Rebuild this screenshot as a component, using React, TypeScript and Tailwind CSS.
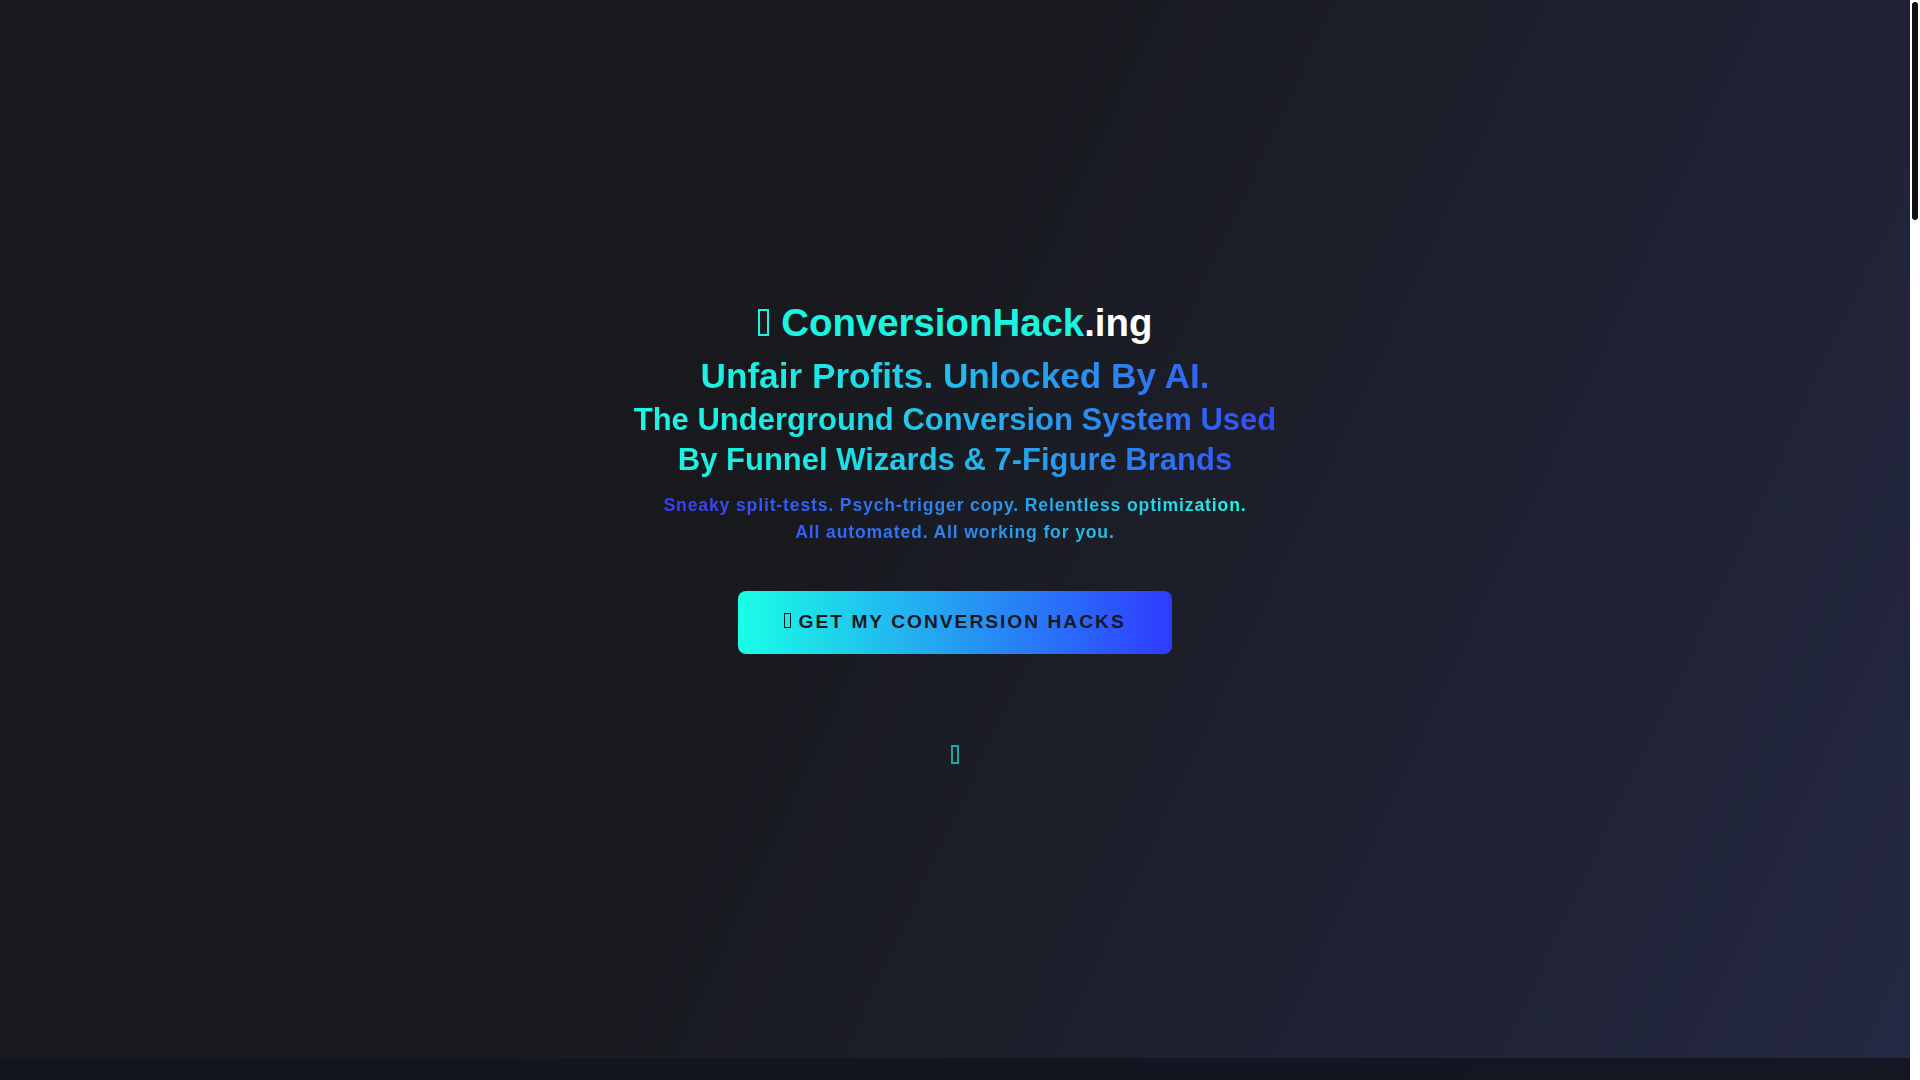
import React from "react";

function Tofu({ className }: { className: string }) {
  return <span className={"inline-block align-baseline border-solid border-current " + className} />;
}

export default function App() {
  return (
    <div className="bg-white pr-[10px] font-['Liberation_Sans',Arial,sans-serif]">
      <main className="bg-[#14161f]">
        {/* hero */}
        <section className="h-[1058px] bg-[linear-gradient(115deg,#18191d_40%,#242842_100%)] flex flex-col items-center pt-[300px] text-center">
          <div className="text-[38.4px] leading-[46px] font-bold">
            <span className="text-[#1af4e1]">
              <Tofu className="w-[11px] h-[27px] border-2 mr-[2px]" /> ConversionHack
            </span>
            <span className="text-white">.ing</span>
          </div>

          <div className="mt-[9px] w-fit font-bold bg-[linear-gradient(90deg,#1af7e3_0%,#1de6e6_30%,#2a90f0_70%,#3447fa_100%)] bg-clip-text text-transparent">
            <div className="text-[35.2px] leading-[42px]">Unfair Profits. Unlocked By AI.</div>
            <div className="mt-[3px] text-[31px] leading-[40px]">
              The Underground Conversion System Used
              <br />
              By Funnel Wizards &amp; 7-Figure Brands
            </div>
          </div>

          <p className="mt-[12px] w-fit text-[17.6px] leading-[27px] font-bold tracking-[0.85px] bg-[linear-gradient(90deg,#3a3aff_0%,#2a8ff0_55%,#1affe4_100%)] bg-clip-text text-transparent">
            Sneaky split-tests. Psych-trigger copy. Relentless optimization.
            <br />
            All automated. All working for you.
          </p>

          <button className="mt-[45px] h-[63px] px-[46.5px] rounded-[8px] bg-[linear-gradient(90deg,#1affe6,#2f3bff)] text-[#18181d] text-[19.2px] font-bold uppercase tracking-[2px]">
            <Tofu className="w-[7px] h-[15px] border-[1.5px]" /> Get My Conversion Hacks
          </button>

          <div className="mt-[91px] h-[19px] leading-none text-[#1af4e1] opacity-65">
            <Tofu className="w-[8px] h-[19px] border-2" />
          </div>
        </section>

        {/* next section, only its top edge shows */}
        <section className="h-[4200px] bg-[linear-gradient(115deg,#12151f,#161824)]" />
      </main>

      {/* page scrollbar thumb */}
      <div className="fixed right-[2px] top-[2px] w-[6px] h-[218px] rounded-full bg-[#111]" />
    </div>
  );
}
